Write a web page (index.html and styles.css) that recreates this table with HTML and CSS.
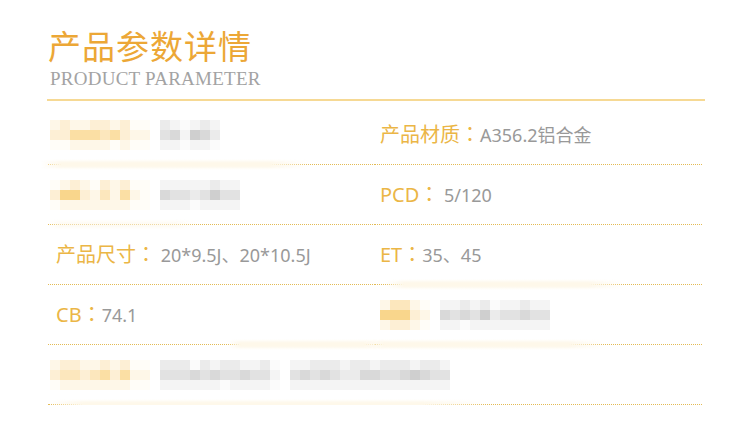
FILE: index.html
```html
<!DOCTYPE html>
<html lang="zh-CN">
<head>
<meta charset="utf-8">
<title>产品参数详情</title>
<link rel="stylesheet" href="styles.css">
</head>
<body>
<div class="wrap">
  <h1 class="title">产品参数详情</h1>
  <div class="subtitle">PRODUCT PARAMETER</div>
  <div class="rule"></div>
  <div class="grid">
    <div class="cell left m sm1">
      <div class="mosaic">
        <div class="mr"><i class="y1"></i><i class="y2"></i><i class="y1"></i><i class="y1"></i><i class="y2"></i><i class="y2"></i><i class="y1"></i><i class="y2"></i><i class="y0"></i><i class="y0"></i></div>
        <div class="mr"><i class="y2"></i><i class="y2"></i><i class="y4"></i><i class="y4"></i><i class="y4"></i><i class="y3"></i><i class="y4"></i><i class="y2"></i><i class="y1"></i><i class="y1"></i></div>
        <div class="mr"><i class="y0"></i><i class="y0"></i><i class="y1"></i><i class="y1"></i><i class="y1"></i><i class="y1"></i><i class="y0"></i><i class="y1"></i><i class="y0"></i><i class="y0"></i></div>
      </div>
      <div class="mosaic">
        <div class="mr"><i class="g2"></i><i class="g1"></i><i class="g0"></i><i class="g1"></i><i class="g2"></i><i class="g1"></i></div>
        <div class="mr"><i class="g3"></i><i class="g4"></i><i class="g1"></i><i class="g5"></i><i class="g4"></i><i class="g2"></i></div>
        <div class="mr"><i class="g1"></i><i class="g1"></i><i class="g0"></i><i class="g1"></i><i class="g1"></i><i class="g0"></i></div>
      </div>
    </div>
    <div class="cell right"><span class="label">产品材质<span class="colon" lang="ja">：</span></span><span class="value">A356.2铝合金</span></div>

    <div class="cell left m sm2">
      <div class="mosaic">
        <div class="mr"><i class="y0"></i><i class="y1"></i><i class="y2"></i><i class="y1"></i><i class="y0"></i><i class="y2"></i><i class="y1"></i><i class="y2"></i><i class="y0"></i><i class="y0"></i></div>
        <div class="mr"><i class="y2"></i><i class="y5"></i><i class="y5"></i><i class="y2"></i><i class="y1"></i><i class="y3"></i><i class="y1"></i><i class="y4"></i><i class="y1"></i><i class="y0"></i></div>
        <div class="mr"><i class="y0"></i><i class="y1"></i><i class="y1"></i><i class="y1"></i><i class="y1"></i><i class="y1"></i><i class="y1"></i><i class="y1"></i><i class="y0"></i><i class="y0"></i></div>
      </div>
      <div class="mosaic">
        <div class="mr"><i class="g1"></i><i class="g1"></i><i class="g1"></i><i class="g1"></i><i class="g1"></i><i class="g2"></i><i class="g1"></i><i class="g1"></i></div>
        <div class="mr"><i class="g4"></i><i class="g3"></i><i class="g3"></i><i class="g2"></i><i class="g3"></i><i class="g5"></i><i class="g3"></i><i class="g3"></i></div>
        <div class="mr"><i class="g1"></i><i class="g1"></i><i class="g1"></i><i class="g0"></i><i class="g1"></i><i class="g1"></i><i class="g1"></i><i class="g1"></i></div>
      </div>
    </div>
    <div class="cell right"><span class="label">PCD<span class="colon" lang="ja">：</span></span><span class="value">&nbsp;5/120</span></div>

    <div class="cell left"><span class="label">产品尺寸<span class="colon" lang="ja">：</span></span><span class="value">&nbsp;20*9.5J、20*10.5J</span></div>
    <div class="cell right sm3"><span class="label">ET<span class="colon" lang="ja">：</span></span><span class="value">35、45</span></div>

    <div class="cell left sm4"><span class="label">CB<span class="colon" lang="ja">：</span></span><span class="value">74.1</span></div>
    <div class="cell right sm5">
      <div class="mosaic">
        <div class="mr"><i class="y1"></i><i class="y3"></i><i class="y3"></i><i class="y1"></i><i class="y0"></i></div>
        <div class="mr"><i class="y5"></i><i class="y5"></i><i class="y5"></i><i class="y2"></i><i class="y1"></i></div>
        <div class="mr"><i class="y1"></i><i class="y2"></i><i class="y2"></i><i class="y1"></i><i class="y0"></i></div>
      </div>
      <div class="mosaic">
        <div class="mr"><i class="g1"></i><i class="g1"></i><i class="g2"></i><i class="g1"></i><i class="g2"></i><i class="g0"></i><i class="g1"></i><i class="g1"></i><i class="g2"></i><i class="g1"></i><i class="g1"></i></div>
        <div class="mr"><i class="g4"></i><i class="g3"></i><i class="g4"></i><i class="g3"></i><i class="g5"></i><i class="g2"></i><i class="g3"></i><i class="g3"></i><i class="g4"></i><i class="g3"></i><i class="g3"></i></div>
        <div class="mr"><i class="g1"></i><i class="g1"></i><i class="g0"></i><i class="g1"></i><i class="g1"></i><i class="g1"></i><i class="g1"></i><i class="g1"></i><i class="g1"></i><i class="g1"></i><i class="g1"></i></div>
      </div>
    </div>

    <div class="cell full m sm6">
      <div class="mosaic">
        <div class="mr"><i class="y1"></i><i class="y2"></i><i class="y2"></i><i class="y1"></i><i class="y1"></i><i class="y2"></i><i class="y1"></i><i class="y2"></i><i class="y0"></i><i class="y0"></i></div>
        <div class="mr"><i class="y2"></i><i class="y3"></i><i class="y3"></i><i class="y2"></i><i class="y3"></i><i class="y4"></i><i class="y2"></i><i class="y4"></i><i class="y1"></i><i class="y1"></i></div>
        <div class="mr"><i class="y0"></i><i class="y1"></i><i class="y1"></i><i class="y1"></i><i class="y1"></i><i class="y1"></i><i class="y1"></i><i class="y1"></i><i class="y0"></i><i class="y0"></i></div>
      </div>
      <div class="mosaic">
        <div class="mr"><i class="g2"></i><i class="g2"></i><i class="g2"></i><i class="g0"></i><i class="g2"></i><i class="g1"></i><i class="g2"></i><i class="g2"></i><i class="g1"></i><i class="g1"></i><i class="g2"></i><i class="g0"></i></div>
        <div class="mr"><i class="g3"></i><i class="g3"></i><i class="g3"></i><i class="g4"></i><i class="g3"></i><i class="g4"></i><i class="g3"></i><i class="g3"></i><i class="g4"></i><i class="g3"></i><i class="g3"></i><i class="g1"></i></div>
        <div class="mr"><i class="g1"></i><i class="g1"></i><i class="g1"></i><i class="g1"></i><i class="g1"></i><i class="g1"></i><i class="g0"></i><i class="g1"></i><i class="g1"></i><i class="g1"></i><i class="g1"></i><i class="g0"></i></div>
      </div>
      <div class="mosaic">
        <div class="mr"><i class="g1"></i><i class="g1"></i><i class="g2"></i><i class="g2"></i><i class="g2"></i><i class="g1"></i><i class="g2"></i><i class="g2"></i><i class="g1"></i><i class="g2"></i><i class="g2"></i><i class="g2"></i><i class="g1"></i><i class="g2"></i><i class="g2"></i><i class="g1"></i></div>
        <div class="mr"><i class="g3"></i><i class="g4"></i><i class="g3"></i><i class="g4"></i><i class="g3"></i><i class="g2"></i><i class="g2"></i><i class="g4"></i><i class="g4"></i><i class="g3"></i><i class="g3"></i><i class="g4"></i><i class="g5"></i><i class="g4"></i><i class="g3"></i><i class="g3"></i></div>
        <div class="mr"><i class="g1"></i><i class="g1"></i><i class="g1"></i><i class="g1"></i><i class="g1"></i><i class="g1"></i><i class="g1"></i><i class="g1"></i><i class="g1"></i><i class="g1"></i><i class="g1"></i><i class="g1"></i><i class="g1"></i><i class="g1"></i><i class="g1"></i><i class="g1"></i></div>
      </div>
    </div>
  </div>
</div>
</body>
</html>
```

FILE: styles.css
```css
html, body {
  margin: 0;
  padding: 0;
  background: #ffffff;
}

.wrap {
  margin-left: 47px;
  width: 658px;
  padding-top: 29px;
}

.title {
  margin: 0;
  padding-left: 1px;
  font-family: "Noto Sans CJK SC", sans-serif;
  font-weight: normal;
  font-size: 33px;
  line-height: 33px;
  letter-spacing: 1px;
  color: #eca736;
}

.subtitle {
  margin-top: 7px;
  padding-left: 3px;
  font-family: "Liberation Serif", "Times New Roman", serif;
  font-size: 19px;
  line-height: 19px;
  letter-spacing: 0.25px;
  color: #a3a3a3;
}

.rule {
  margin-top: 11px;
  height: 2px;
  background: #f6d994;
}

.grid {
  display: grid;
  grid-template-columns: 327px 327px;
  margin-left: 1px;
  padding-top: 4px;
}

.cell {
  position: relative;
  display: flex;
  align-items: center;
  height: 59px;
  border-bottom: 1px dotted #e3bb55;
  font-family: "Noto Sans", "Noto Sans CJK SC", sans-serif;
  line-height: 24px;
  white-space: nowrap;
}

.left { padding-left: 8px; }
.right { padding-left: 5px; }
.full { grid-column: 1 / -1; }
.m { padding-left: 2px; }

.label {
  font-size: 20px;
  color: #ebb646;
}

.colon {
  font-family: "Noto Sans CJK JP", sans-serif;
}

.value {
  font-size: 18px;
  color: #999999;
}

.mosaic {
  display: flex;
  flex-direction: column;
  margin-right: 10px;
  filter: blur(0.7px);
}

.mr { display: flex; }

.mr i {
  display: block;
  width: 10px;
  height: 10px;
}

.y0 { background: #fffdf8; }
.y1 { background: #fef7e8; }
.y2 { background: #fdefd5; }
.y3 { background: #fce7bd; }
.y4 { background: #fbdfa4; }
.y5 { background: #f9d68c; }

.g0 { background: #fbfbfb; }
.g1 { background: #f4f4f4; }
.g2 { background: #ebebeb; }
.g3 { background: #e2e2e2; }
.g4 { background: #d9d9d9; }
.g5 { background: #cfcfcf; }

/* blurred smears over parts of the dotted separators */
.sm1::after, .sm2::after, .sm3::after, .sm4::after, .sm5::after, .sm6::after {
  content: "";
  position: absolute;
  bottom: -6px;
  height: 11px;
  background: linear-gradient(to bottom, rgba(254,248,234,0), #fef8ea 35%, #fef8ea 65%, rgba(254,248,234,0));
  -webkit-mask-image: linear-gradient(to right, transparent, #000 8%, #000 85%, transparent);
  mask-image: linear-gradient(to right, transparent, #000 8%, #000 85%, transparent);
}

.sm1::after { left: -8px; width: 270px; }
.sm2::after { left: 0; width: 150px; opacity: 0.5; }
.sm3::after { left: 10px; width: 240px; }
.sm4::after { left: 180px; width: 160px; }
.sm5::after { left: -10px; width: 240px; }
.sm6::after { left: 0; width: 440px; }
```
